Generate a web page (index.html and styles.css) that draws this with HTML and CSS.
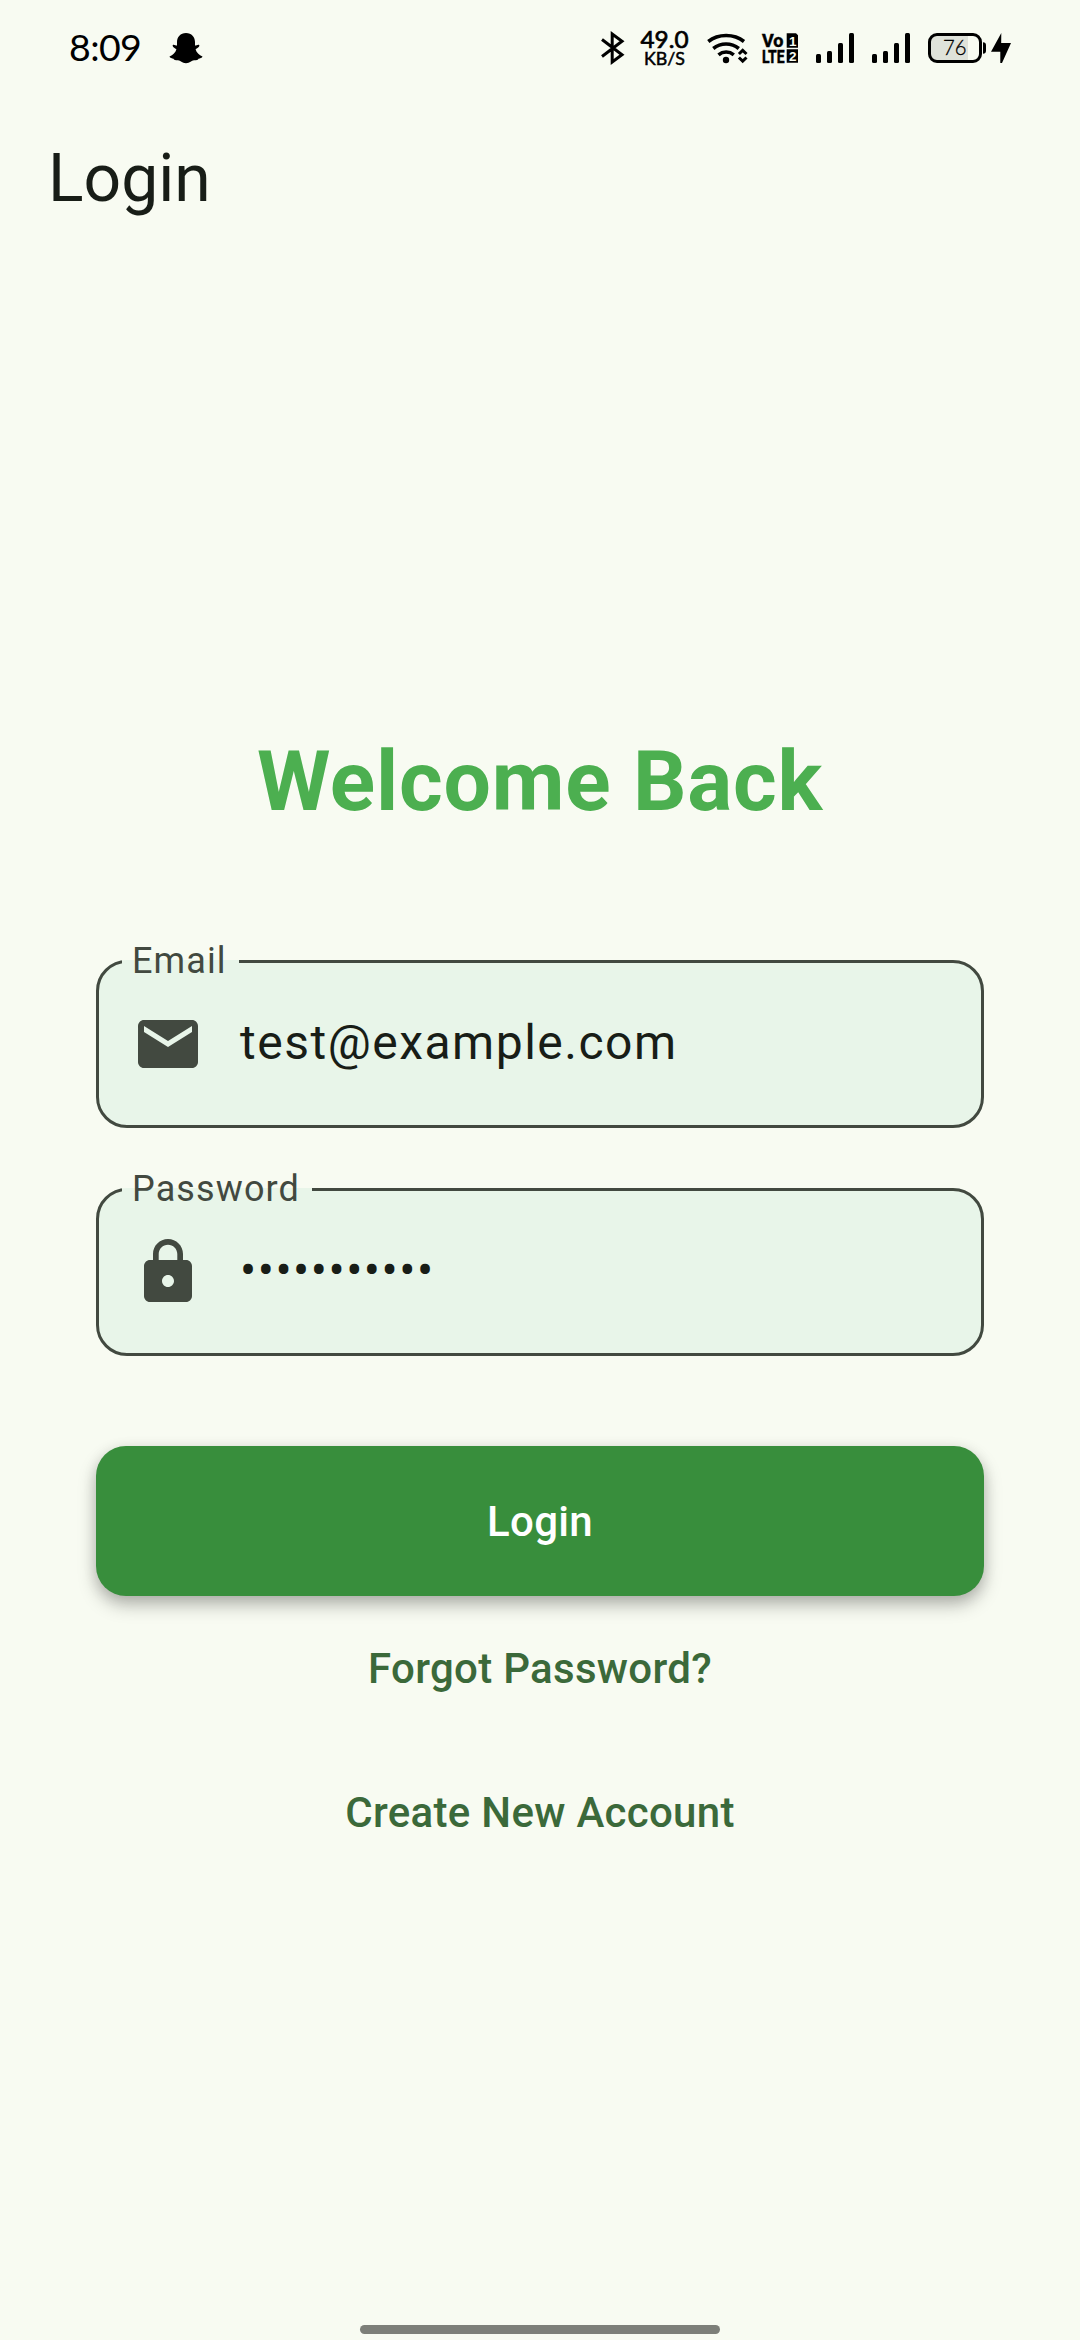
FILE: index.html
```html
<!DOCTYPE html>
<html lang="en">
<head>
<meta charset="utf-8">
<title>Login</title>
<link rel="stylesheet" href="styles.css">
</head>
<body>
<div class="screen">
  <div class="status-bar">
    <div class="status-left">
      <span class="clock">8:09</span>
      <svg class="icon-ghost" width="34" height="32" viewBox="169 33 34 32"><path d="M186 33c-5.600 0-9 4-9 9v3.600c-1.500 0-3-1.500-4.200-.6-.8 1.500 1.600 3 3.600 4.200-.6 3-3.600 5.800-6.900 7.300.3 1.700 2.600 1.800 4 2.200.3 1.500 2 1.500 4.500 1.500 2.500 0 4 3 8 3s5.500-3 8-3c2.500 0 4.200 0 4.500-1.500 1.400-.4 3.700-.5 4-2.200-3.300-1.500-6.300-4.300-6.900-7.300 2-1.200 4.400-2.700 3.600-4.200-1.200-.9-2.700.6-4.200.6V42c0-5-3.400-9-9-9z"/></svg>
    </div>
    <div class="status-right">
      <svg width="30" height="94" viewBox="598 0 30 94"><path class="line" d="M602 39.500 622 54.800 612.200 62V34L622 41.200 602 56.500"/></svg>
      <svg width="72" height="94" viewBox="628 0 72 94"><text class="speed" x="640.500" y="47.800" textLength="48" lengthAdjust="spacingAndGlyphs">49.0</text><text class="unit" x="644" y="65" textLength="41" lengthAdjust="spacingAndGlyphs">KB/S</text></svg>
      <svg width="55" height="94" viewBox="700 0 55 94"><path class="line wave" d="M708.300 41.500c10-8 25.700-8 35.700 0M713.300 48.500c7.500-6 18-6 25.500 0M718.500 54.800c4.500-3.700 10.800-3.700 15.300 0"/><path class="line" d="M738.900 54l3.800-3.600 3.800 3.600M738.900 57.500l3.800 3.600 3.800-3.600"/><circle cx="726" cy="60" r="3.200"/></svg>
      <svg width="57" height="94" viewBox="755 0 57 94"><text class="lte" x="762" y="47" textLength="21.500" lengthAdjust="spacingAndGlyphs">Vo</text><text class="lte" x="762" y="62.800" textLength="22.500" lengthAdjust="spacingAndGlyphs">LTE</text><path d="M786.700 33.300h9.300l2 2v12.400h-11.300zM786.700 49.300h11.300v13.400h-11.300z"/><text class="sim" x="789" y="45.500">1</text><text class="sim" x="789" y="60.800">2</text></svg>
      <svg width="56" height="94" viewBox="812 0 56 94"><rect x="816" y="54" width="5" height="9" rx="1.500"/><rect x="827" y="51" width="5" height="12" rx="1.500"/><rect x="838" y="43" width="5" height="20" rx="1.500"/><rect x="849" y="33" width="5" height="30" rx="1.500"/></svg>
      <svg width="56" height="94" viewBox="868 0 56 94"><rect x="872" y="54" width="5" height="9" rx="1.500"/><rect x="883" y="51" width="5" height="12" rx="1.500"/><rect x="894" y="43" width="5" height="20" rx="1.500"/><rect x="905" y="33" width="5" height="30" rx="1.500"/></svg>
      <svg width="90" height="94" viewBox="924 0 90 94"><path class="charge" d="M968 35h-31q-7 0-7 7v12q0 7 7 7h31z"/><rect class="line" x="929.500" y="34.500" width="51" height="27" rx="7.500"/><path d="M983 42.300q3 0 3 3v5.400q0 3-3 3zM1001.300 33 991 51.700h9.300V63h1.700l9-20h-9.800z"/><text class="level" x="943" y="55" textLength="23.500" lengthAdjust="spacingAndGlyphs">76</text></svg>
    </div>
  </div>

  <header class="app-bar"><h1 class="app-title">Login</h1></header>

  <main class="content">
    <h2 class="welcome">Welcome Back</h2>
    <form class="form">
      <fieldset class="field">
        <legend class="label">Email</legend>
        <div class="field-row">
          <svg class="field-icon" viewBox="0 0 24 24"><path d="M20 4H4c-1.100 0-1.990.9-1.990 2L2 18c0 1.100.9 2 2 2h16c1.100 0 2-.9 2-2V6c0-1.100-.9-2-2-2zm0 4-8 5-8-5V6l8 5 8-5v2z"/></svg>
          <span class="value">test@example.com</span>
        </div>
      </fieldset>
      <fieldset class="field">
        <legend class="label">Password</legend>
        <div class="field-row">
          <svg class="field-icon" viewBox="0 0 24 24"><path d="M18 8h-1V6c0-2.760-2.240-5-5-5S7 3.240 7 6v2H6c-1.100 0-2 .9-2 2v10c0 1.100.9 2 2 2h12c1.100 0 2-.9 2-2V10c0-1.100-.9-2-2-2zm-6 9c-1.100 0-2-.9-2-2s.9-2 2-2 2 .9 2 2-.9 2-2 2zm3.100-9H8.900V6c0-1.710 1.390-3.100 3.100-3.100s3.100 1.390 3.100 3.100v2z"/></svg>
          <span class="value">•••••••••••</span>
        </div>
      </fieldset>
      <button class="submit" type="button">Login</button>
      <button class="text-button" type="button">Forgot Password?</button>
      <button class="text-button" type="button">Create New Account</button>
    </form>
  </main>

  <div class="home-bar"></div>
</div>
</body>
</html>
```
FILE: styles.css
```css
* { box-sizing: border-box; }

body {
  margin: 0;
  background: #f8fbf2;
  color: #181d17;
  font-family: Roboto, sans-serif;
}

.screen {
  display: flex;
  flex-direction: column;
  width: 1080px;
  height: 2340px;
  overflow: hidden;
}

.status-bar {
  display: flex;
  justify-content: space-between;
  height: 94px;
  padding: 0 66px 0 69px;
  color: #000;
  font-family: Lato, sans-serif;
}

.status-left { display: flex; align-items: center; gap: 27px; }
.status-right { display: flex; }
.status-bar svg { display: block; }

.clock {
  width: 73px;
  font-size: 37.500px;
  line-height: 94px;
  letter-spacing: -0.600px;
  white-space: nowrap;
}

.icon-ghost { margin-top: 4px; }

.line { fill: none; stroke: #000; stroke-width: 3; }
.wave { stroke-width: 3.600; }
.charge { fill: #dfe2da; }
.speed { font-size: 24px; font-weight: 400; stroke: #000; stroke-width: 0.700px; }
.unit { font-size: 18px; font-weight: 400; stroke: #000; stroke-width: 0.500px; }
.lte { font: 700 18.500px Roboto, sans-serif; stroke: #000; stroke-width: 0.500px; }
.sim { font: 700 13.500px "Liberation Sans", sans-serif; fill: #f8fbf2; }
.level { font-size: 21px; font-weight: 300; stroke: #000; stroke-width: 0.300px; }

.app-bar {
  display: flex;
  align-items: center;
  height: 168px;
  padding: 0 48px;
}

.app-title { margin: 0; font-size: 66px; font-weight: 400; }

.content {
  display: flex;
  flex-direction: column;
  flex: 1;
  padding: 470px 96px 0;
}

.welcome {
  margin: 0;
  color: #4caf50;
  font-size: 84px;
  font-weight: 700;
  line-height: 100px;
  letter-spacing: 0.750px;
  text-align: center;
}

.form { display: flex; flex-direction: column; margin-top: 108px; }

/* The outline starts at the middle of the legend, 20px below the fieldset's top. */
.field {
  height: 188px;
  min-width: 0;
  margin: 0 0 40px;
  padding: 0;
  border: 3px solid #424940;
  border-radius: 31px;
  background: #e8f5e9;
}

.label {
  margin-left: 23px;
  padding: 0 12px 0 10px;
  color: #424940;
  font-size: 36px;
  line-height: 43px;
  letter-spacing: 1.125px;
}

.field-row {
  display: flex;
  align-items: center;
  gap: 36px;
  height: 122px;
  padding-left: 33px;
}

.field-icon { width: 72px; height: 72px; fill: #424940; }

.value {
  padding-bottom: 2px;
  font-size: 48px;
  line-height: 56px;
  letter-spacing: 1.500px;
}

.submit {
  height: 150px;
  margin-top: 50px;
  border: 0;
  border-radius: 30px;
  background: #388e3c;
  box-shadow: 0 9px 18px rgba(0, 0, 0, 0.26), 0 3px 14px rgba(0, 0, 0, 0.1);
  color: #fff;
  font: 500 42px Roboto, sans-serif;
  letter-spacing: 0.300px;
}

.text-button {
  align-self: center;
  height: 144px;
  padding: 0 36px;
  border: 0;
  background: none;
  color: #3b693a;
  font: 500 42px Roboto, sans-serif;
  letter-spacing: 0.300px;
}

.home-bar {
  width: 360px;
  height: 9px;
  margin: 0 auto 6px;
  border-radius: 5px;
  background: #7d7f79;
}
```
